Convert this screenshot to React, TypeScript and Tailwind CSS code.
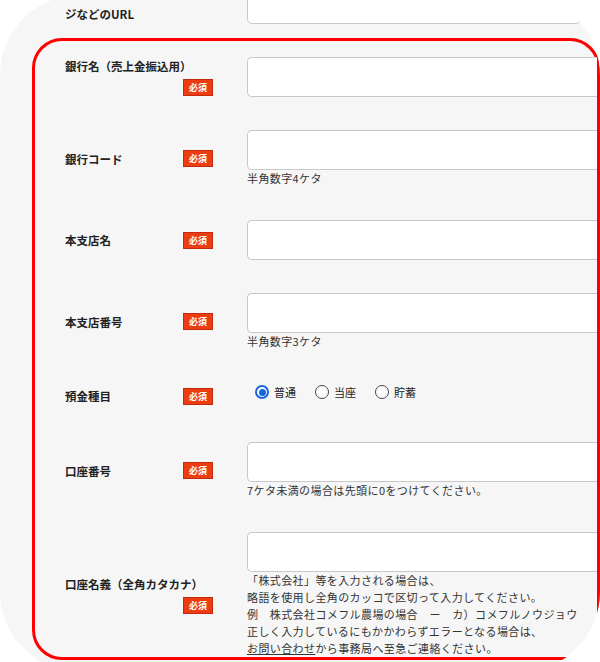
import React from 'react'

interface FieldRow {
    label: string
    kind: 'input' | 'radio'
    hints?: React.ReactNode[]
}

const rows: FieldRow[] = [
    { label: '銀行名（売上金振込用）', kind: 'input' },
    { label: '銀行コード', kind: 'input', hints: ['半角数字4ケタ'] },
    { label: '本支店名', kind: 'input' },
    { label: '本支店番号', kind: 'input', hints: ['半角数字3ケタ'] },
    { label: '預金種目', kind: 'radio' },
    { label: '口座番号', kind: 'input', hints: ['7ケタ未満の場合は先頭に0をつけてください。'] },
    {
        label: '口座名義（全角カタカナ）',
        kind: 'input',
        hints: [
            '「株式会社」等を入力される場合は、',
            '略語を使用し全角のカッコで区切って入力してください。',
            '例　株式会社コメフル農場の場合　ー　カ）コメフルノウジョウ',
            '正しく入力しているにもかかわらずエラーとなる場合は、',
            <>
                <span className="underline">お問い合わせ</span>から事務局へ至急ご連絡ください。
            </>,
        ],
    },
]

const accountTypes = ['普通', '当座', '貯蓄']

const RequiredBadge = () => (
    <span className="ml-auto flex h-[17px] w-[30px] items-center justify-center border border-[#c52a0b] bg-[#ec3c12] text-[9px] font-bold leading-none text-white">
        必須
    </span>
)

const Radio = ({ checked }: { checked: boolean }) =>
    checked ? (
        <span className="flex h-[14px] w-[14px] items-center justify-center rounded-full border-2 border-[#1766e0] bg-white">
            <span className="h-[7px] w-[7px] rounded-full bg-[#1766e0]" />
        </span>
    ) : (
        <span className="h-[14px] w-[14px] rounded-full border-[1.5px] border-[#444] bg-white" />
    )

const App = () => {
    return (
        <div className="h-[662px] w-[600px] overflow-hidden bg-white font-['Noto_Sans_CJK_JP','Noto_Sans',sans-serif] text-[#222]">
            <div className="-mt-[5px] h-[677px] w-[600px] overflow-hidden rounded-[80px] bg-[#f6f6f6]">
                {/* tail of the previous field */}
                <div className="flex h-[29px] items-end">
                    <p className="mb-[2px] w-[247px] shrink-0 pl-[65px] text-[11.5px] font-bold leading-[16px]">
                        ジなどのURL
                    </p>
                    <div className="h-[40px] w-[334px] shrink-0 rounded-[5px] border border-[#c8c8c8] bg-white" />
                </div>

                <div className="ml-[32px] mt-[14px] h-[622px] w-[568px] rounded-[30px] border-[3px] border-[#ff0000] pl-[30px] pt-[16px]">
                    <div className="flex flex-col gap-[33px]">
                        {rows.map((row) => (
                            <div key={row.label} className="flex items-center gap-[34px]">
                                <div className="flex w-[148px] shrink-0 flex-wrap items-center gap-y-[5px]">
                                    <span className="text-[11.5px] font-bold leading-[16px]">{row.label}</span>
                                    <RequiredBadge />
                                </div>
                                {row.kind === 'radio' ? (
                                    <div className="flex h-[26px] flex-1 items-center gap-[19px] pb-[8px] pl-[8px]">
                                        {accountTypes.map((t, i) => (
                                            <label key={t} className="flex items-center gap-[5px] text-[11px] leading-none text-[#222]">
                                                <Radio checked={i === 0} />
                                                {t}
                                            </label>
                                        ))}
                                    </div>
                                ) : (
                                    <div className="flex flex-1 flex-col">
                                        <div className="h-[40px] rounded-l-[5px] border border-r-0 border-[#c8c8c8] bg-white" />
                                        {row.hints && (
                                            <div className="text-[11px] leading-[17px] tracking-[0.4px] text-[#333]">
                                                {row.hints.map((h, i) => (
                                                    <p key={i} className="whitespace-nowrap">{h}</p>
                                                ))}
                                            </div>
                                        )}
                                    </div>
                                )}
                            </div>
                        ))}
                    </div>
                </div>
            </div>
        </div>
    )
}

export default App
